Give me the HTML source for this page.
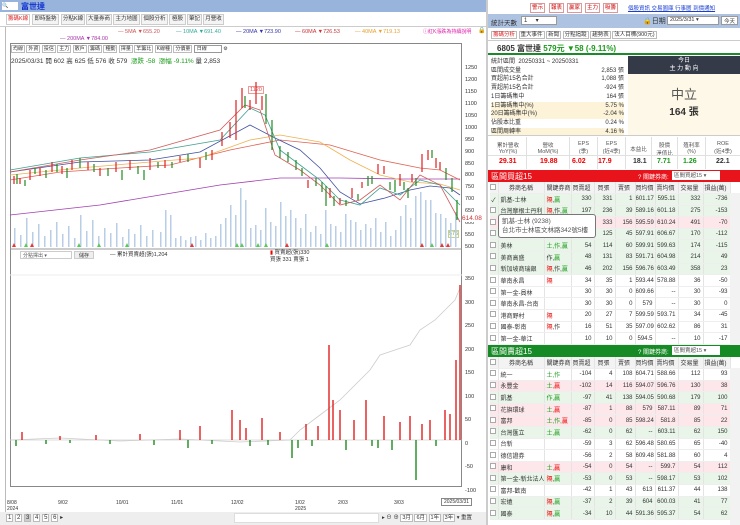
<!DOCTYPE html>
<html><head><meta charset="utf-8"><style>
*{box-sizing:border-box;margin:0;padding:0}
body{width:740px;height:525px;overflow:hidden;background:#fff;font-family:"Liberation Sans","Noto Sans CJK TC",sans-serif;font-size:7px;color:#333;position:relative}
.a{position:absolute;white-space:nowrap}
.tab{position:absolute;top:14px;height:11px;border:1px solid #ccc;background:#f4f4f4;font-size:5.5px;line-height:9px;text-align:center;white-space:nowrap;overflow:hidden}
.btn{position:absolute;top:3px;height:10px;border:1px solid #d99;background:#fff;color:#c00;font-size:5.5px;line-height:8px;text-align:center;white-space:nowrap;overflow:hidden}
table{border-collapse:collapse;table-layout:fixed;position:absolute;left:490px;width:240px;font-size:6px}
tr{height:11.6px}
td{height:11.6px;border-right:1px solid #e4e4e4;border-bottom:1px solid #eee;text-align:right;padding-right:2px;white-space:nowrap;overflow:hidden}
td:nth-child(2){text-align:left;padding-left:2px}td:nth-child(3){text-align:left;padding-left:2px}
tr.h td{background:#f3f3f3;text-align:center;color:#333}
tr.g td{background:#e9f5e9}tr.r td{background:#fde7ea}
.cb{display:inline-block;width:6px;height:6px;border:1px solid #aaa;background:#fff}
.rd{color:#e00}.gr{color:#1a9a1a}
.mt{position:absolute;top:137px;height:32px;text-align:center;font-size:5.5px;color:#555;border-right:1px solid #e0e0e0;white-space:nowrap}
.tb span{border:1px solid #bbb;padding:0 1px}
</style></head><body>
<div class="a" style="left:0;top:0;width:488px;height:12px;background:#98b4dc"></div>
<div class="a" style="left:2px;top:2px;width:16px;height:8px;background:#fff;font-size:5px;line-height:8px">🔍</div>
<div class="a" style="left:21px;top:1px;color:#1030d0;font-size:8px;font-weight:bold">富世達</div>
<div class="tab" style="left:6px;width:24px;color:#d22;background:#fff">籌碼K線</div>
<div class="tab" style="left:32px;width:27px">即時盤勢</div>
<div class="tab" style="left:61px;width:24px">分點K線</div>
<div class="tab" style="left:86px;width:26px">大量券商</div>
<div class="tab" style="left:113px;width:27px">主力地圖</div>
<div class="tab" style="left:141px;width:27px">個股分析</div>
<div class="tab" style="left:169px;width:17px">極股</div>
<div class="tab" style="left:187px;width:15px">筆記</div>
<div class="tab" style="left:203px;width:21px">月營收</div>
<div class="a" style="left:0;top:26px;width:488px;height:1px;background:#ccc"></div>
<div class="a" style="left:5px;top:27px;width:1px;height:485px;background:#bbb"></div>
<div class="a" style="top:29px;left:118px;font-size:5.5px;color:#c55">— 5MA ▼655.20</div>
<div class="a" style="top:29px;left:176px;font-size:5.5px;color:#3a9">— 10MA ▼691.40</div>
<div class="a" style="top:29px;left:236px;font-size:5.5px;color:#33a">— 20MA ▼723.90</div>
<div class="a" style="top:29px;left:295px;font-size:5.5px;color:#c33">— 60MA ▼726.53</div>
<div class="a" style="top:29px;left:355px;font-size:5.5px;color:#e9a030">— 40MA ▼719.13</div>
<div class="a" style="top:36px;left:60px;font-size:5.5px;color:#a3a">— 200MA ▼784.00</div>
<div class="a" style="top:28px;left:423px;font-size:5px;color:#d2a">ⓘ紅K漲跌為持續說明</div>
<div class="a" style="top:27px;left:478px;font-size:6px">🔒</div>
<div class="a" style="left:10px;top:43px;width:452px;height:444px;border:1px solid #888"></div>
<div class="a tb" style="left:11px;top:45px;font-size:5px">
<span>均線</span> <span>外資</span> <span>投信</span> <span>主力</span> <span>散戶</span> <span>籌碼</span> <span>種動</span> <span>擇量</span> <span>羊籌比</span> <span>K線種</span> <span>分價量</span> <span style="border-color:#999;padding:0 14px 0 2px">日線</span> ⚙</div>
<div class="a" style="left:11px;top:55px;font-size:6.5px">2025/03/31 開 602 高 625 低 576 收 579 <span class="gr">&nbsp;漲跌 -58 &nbsp;漲幅 -9.11%</span> 量 2,853</div>
<div class="a" style="left:465px;top:63px;font-size:5.5px;line-height:11.93px;color:#333;white-space:normal">1250<br>1200<br>1150<br>1100<br>1050<br>1000<br>950<br>900<br>850<br>800<br>750<br>700<br>650<br>600<br>550<br>500</div>
<div class="a" style="left:462px;top:215px;font-size:6.5px;color:#c33;background:#fff">614.08</div>
<div class="a" style="left:448px;top:230px;font-size:5.5px;color:#6a6;background:#ffe;border:1px solid #cc9">576</div>
<div class="a" style="left:248px;top:86px;font-size:5.5px;color:#d44;border:1px solid #e99;padding:0 1px">1120</div>
<svg class="a" style="left:0;top:0" width="490" height="525">
<g fill="#b8cde6">
<rect x="14" y="228" width="1.5" height="19"/><rect x="20" y="235" width="1.5" height="12"/><rect x="26" y="218" width="1.5" height="29"/><rect x="32" y="232" width="1.5" height="15"/><rect x="38" y="224" width="1.5" height="23"/><rect x="44" y="236" width="1.5" height="11"/><rect x="50" y="230" width="1.5" height="17"/><rect x="56" y="222" width="1.5" height="25"/><rect x="62" y="234" width="1.5" height="13"/><rect x="68" y="226" width="1.5" height="21"/><rect x="74" y="238" width="1.5" height="9"/><rect x="80" y="215" width="1.5" height="32"/><rect x="86" y="231" width="1.5" height="16"/><rect x="92" y="220" width="1.5" height="27"/><rect x="98" y="236" width="1.5" height="11"/><rect x="104" y="228" width="1.5" height="19"/><rect x="110" y="233" width="1.5" height="14"/><rect x="116" y="223" width="1.5" height="24"/><rect x="122" y="237" width="1.5" height="10"/><rect x="128" y="229" width="1.5" height="18"/><rect x="134" y="234" width="1.5" height="13"/><rect x="140" y="225" width="1.5" height="22"/><rect x="146" y="236" width="1.5" height="11"/><rect x="152" y="230" width="1.5" height="17"/>
<rect x="160" y="232" width="1.5" height="15"/><rect x="165" y="210" width="1.5" height="37"/><rect x="170" y="215" width="1.5" height="32"/><rect x="175" y="238" width="1.5" height="9"/><rect x="180" y="236" width="1.5" height="11"/><rect x="185" y="240" width="1.5" height="7"/><rect x="190" y="237" width="1.5" height="10"/><rect x="195" y="236" width="1.5" height="11"/><rect x="200" y="240" width="1.5" height="7"/><rect x="205" y="233" width="1.5" height="14"/><rect x="210" y="238" width="1.5" height="9"/><rect x="215" y="236" width="1.5" height="11"/><rect x="220" y="224" width="1.5" height="23"/><rect x="225" y="218" width="1.5" height="29"/><rect x="230" y="205" width="1.5" height="42"/><rect x="235" y="215" width="1.5" height="32"/><rect x="240" y="188" width="1.5" height="59"/><rect x="245" y="200" width="1.5" height="47"/><rect x="250" y="228" width="1.5" height="19"/><rect x="255" y="225" width="1.5" height="22"/><rect x="260" y="230" width="1.5" height="17"/><rect x="265" y="208" width="1.5" height="39"/><rect x="270" y="222" width="1.5" height="25"/><rect x="275" y="226" width="1.5" height="21"/><rect x="280" y="202" width="1.5" height="45"/><rect x="285" y="216" width="1.5" height="31"/><rect x="290" y="210" width="1.5" height="37"/><rect x="295" y="218" width="1.5" height="29"/><rect x="300" y="228" width="1.5" height="19"/><rect x="305" y="214" width="1.5" height="33"/><rect x="310" y="232" width="1.5" height="15"/><rect x="315" y="226" width="1.5" height="21"/><rect x="320" y="234" width="1.5" height="13"/><rect x="325" y="210" width="1.5" height="37"/><rect x="330" y="224" width="1.5" height="23"/><rect x="335" y="226" width="1.5" height="21"/><rect x="340" y="232" width="1.5" height="15"/><rect x="345" y="214" width="1.5" height="33"/><rect x="350" y="220" width="1.5" height="27"/><rect x="355" y="222" width="1.5" height="25"/><rect x="360" y="230" width="1.5" height="17"/><rect x="365" y="224" width="1.5" height="23"/><rect x="370" y="228" width="1.5" height="19"/><rect x="375" y="218" width="1.5" height="29"/><rect x="380" y="232" width="1.5" height="15"/><rect x="385" y="222" width="1.5" height="25"/><rect x="390" y="236" width="1.5" height="11"/><rect x="395" y="230" width="1.5" height="17"/><rect x="400" y="216" width="1.5" height="31"/><rect x="405" y="205" width="1.5" height="42"/><rect x="410" y="218" width="1.5" height="29"/><rect x="415" y="196" width="1.5" height="51"/><rect x="420" y="192" width="1.5" height="55"/><rect x="425" y="200" width="1.5" height="47"/><rect x="430" y="200" width="1.5" height="47"/><rect x="435" y="213" width="1.5" height="34"/><rect x="440" y="214" width="1.5" height="33"/><rect x="445" y="218" width="1.5" height="29"/><rect x="450" y="223" width="1.5" height="24"/><rect x="455" y="212" width="1.5" height="35"/>
</g>
<polyline fill="none" stroke="#a040b0" stroke-width="0.8" points="10,215 100,205 160,195 220,185 280,178 340,178 400,179 460,179"/>
<polyline fill="none" stroke="#e06050" stroke-width="0.8" points="10,180 60,172 120,168 170,165 230,150 280,140 330,145 380,160 420,168 440,170 460,180"/>
<polyline fill="none" stroke="#f0b050" stroke-width="0.8" points="10,175 80,168 150,162 200,158 250,140 280,135 320,142 350,160 380,175 410,182 440,184 460,190"/>
<polyline fill="none" stroke="#4050a0" stroke-width="0.8" points="10,172 80,162 150,160 200,152 250,125 275,138 300,150 320,168 340,192 360,204 385,198 410,190 430,186 450,188 460,195"/>
<polyline fill="none" stroke="#40a090" stroke-width="0.8" points="10,170 80,158 150,152 220,140 250,108 265,115 280,150 300,165 320,180 340,200 360,205 380,188 400,195 420,180 440,185 460,205"/>
<polyline fill="none" stroke="#d05a5a" stroke-width="0.8" points="10,172 80,160 150,150 220,130 245,105 260,110 275,155 300,170 320,185 340,205 360,200 380,185 400,200 420,175 440,185 460,222"/>
<g stroke-width="1.2">
<path stroke="#e02020" d="M14 176v8M20 178v6M30 170v10M40 168v8M52 162v10M62 166v8M72 160v10M88 162v8M100 168v8M116 162v10M130 160v10M150 158v12M165 160v8M180 156v6M200 158v10M212 150v10M222 132v14M230 122v16M236 100v40M242 88v20M250 100v10M256 82v22M262 96v14M308 180v8M330 188v10M340 198v6M352 188v10M362 182v6M378 164v10M384 166v8M400 174v12M412 174v8M422 154v18M428 150v10M436 158v10M440 162v8"/>
<path stroke="#208a20" d="M17 174v10M25 180v6M35 168v6M46 170v8M57 164v8M67 168v10M80 158v10M94 164v8M108 168v8M122 170v10M138 166v8M144 170v10M158 162v6M172 162v6M188 154v8M206 152v8M245 96v12M266 94v30M272 120v30M280 146v12M288 152v10M296 160v10M302 168v8M316 178v8M322 182v10M326 186v20M334 196v10M346 200v6M358 194v6M368 176v10M372 176v8M390 182v8M395 180v12M404 182v8M408 188v10M416 178v8M432 150v8M446 168v12M452 178v14M457 200v20"/>
</g>
<path fill="#e33" d="M12 247l2-4 2 4zM30 247l2-4 2 4zM190 247l2-4 2 4zM285 247l2-4 2 4zM420 247l2-4 2 4zM440 247l2-4 2 4zM446 247l2-4 2 4z"/>
<path fill="#5c5" d="M24 247l2-4 2 4zM77 247l2-4 2 4zM97 247l2-4 2 4zM125 247l2-4 2 4zM235 247l2-4 2 4zM240 247l2-4 2 4zM256 247l2-4 2 4zM264 247l2-4 2 4zM325 247l2-4 2 4zM430 247l2-4 2 4z"/>
<line x1="10" y1="249" x2="462" y2="249" stroke="#999"/>
<line x1="10" y1="275" x2="462" y2="275" stroke="#eee"/>
<line x1="10" y1="440" x2="462" y2="440" stroke="#bbb" stroke-width="0.6"/>
<polyline fill="none" stroke="#ccc" stroke-width="0.8" points="10,440 60,438 120,441 180,439 240,442 290,440 300,430 320,415 340,400 360,380 370,370 380,355 395,350 410,345 420,330 435,320 445,310 455,300 460,288"/>
<path stroke="#e02020" stroke-width="1.4" d="M22 440v-8M60 440v-4M96 440v-5M140 440v-6M180 440v-10M200 440v-14M232 440v-30M240 440v-20M246 440v-12M262 440v-22M280 440v-8M306 440v-16M318 440v-14M329 440v-95M333 440v-40M340 440v-30M354 440v-20M366 440v-40M384 440v-24M400 440v-18M410 440v-24M422 440v-16M430 440v-20M445 440v-30M450 440v-26M456 440v-80M460 440v-155"/>
<path stroke="#208a20" stroke-width="1.4" d="M16 440v6M46 440v4M70 440v3M110 440v4M154 440v5M188 440v8M212 440v4M250 440v6M268 440v5M292 440v18M298 440v8M312 440v6M346 440v10M372 440v6M378 440v8M392 440v10M416 440v40M436 440v6"/>
</svg>
<div class="a" style="left:20px;top:251px;width:52px;height:8px;border:1px solid #ccc;font-size:5px;color:#555;padding-left:2px">分點擇出 ▾</div>
<div class="a" style="left:74px;top:251px;width:20px;height:8px;border:1px solid #ccc;background:#eee;font-size:5px;text-align:center">儲存</div>
<div class="a" style="left:110px;top:250px;font-size:5.5px">— 累計買賣超(張)1,204</div>
<div class="a" style="left:270px;top:250px;font-size:5.5px;line-height:7px"><span class="rd">▮</span> 買賣超(張)330<br>買張 331 賣張 1</div>
<div class="a" style="left:465px;top:268px;font-size:5.5px;line-height:23.5px">350<br>300<br>250<br>200<br>150<br>100<br>50<br>0<br>-50<br>-100</div>
<div class="a" style="top:500px;left:7px;font-size:5px;line-height:6px">8/08<br>2024</div>
<div class="a" style="top:500px;left:58px;font-size:5px">9/02</div>
<div class="a" style="top:500px;left:116px;font-size:5px">10/01</div>
<div class="a" style="top:500px;left:171px;font-size:5px">11/01</div>
<div class="a" style="top:500px;left:231px;font-size:5px">12/02</div>
<div class="a" style="top:500px;left:295px;font-size:5px;line-height:6px">1/02<br>2025</div>
<div class="a" style="top:500px;left:338px;font-size:5px">2/03</div>
<div class="a" style="top:500px;left:394px;font-size:5px">3/03</div>
<div class="a" style="top:498px;left:441px;font-size:5px;border:1px solid #888;padding:0 2px;background:#fff">2025/03/31</div>
<div class="a" style="left:0;top:512px;width:488px;height:13px;background:#eee"></div>
<div class="a tb" style="left:6px;top:514px;font-size:6px"><span style="background:#fff">1</span> <span style="background:#fff">2</span> <span style="background:#ccc">3</span> <span style="background:#fff">4</span> <span style="background:#fff">5</span> <span style="background:#fff">6</span> ▸</div>
<div class="a" style="left:234px;top:513px;width:145px;height:10px;background:#fff;border:1px solid #ddd"></div>
<div class="a tb" style="left:382px;top:513px;font-size:5.5px">▸ ⊖ ⊕ <span style="background:#fff">3月</span> <span style="background:#fff">6月</span> <span style="background:#fff">1年</span> <span style="background:#fff">3年</span> ▾ 重置</div>
<div class="a" style="left:486px;top:0;width:2px;height:525px;background:#ccc"></div>

<div class="btn" style="left:530px;width:15px">警示</div>
<div class="btn" style="left:549px;width:15px">報表</div>
<div class="btn" style="left:567px;width:15px">贏家</div>
<div class="btn" style="left:585px;width:15px">主力</div>
<div class="btn" style="left:603px;width:15px">吸籌</div>
<div class="a" style="left:628px;top:4px;font-size:5.5px;color:#1a3fd0;text-decoration:underline">個股資訊 交易圖庫 行事曆 到價通知</div>
<div class="a" style="left:488px;top:14px;width:252px;height:14px;background:#aec3e2"></div>
<div class="a" style="left:491px;top:17px;font-size:6.5px">統計天數</div>
<div class="a" style="left:521px;top:16px;width:36px;height:9px;background:#fff;border:1px solid #999;font-size:6px;padding-left:2px">1 &nbsp;&nbsp;&nbsp;&nbsp;▾</div>
<div class="a" style="left:643px;top:16px;font-size:7px">🔒日期</div>
<div class="a" style="left:667px;top:16px;width:52px;height:9px;background:#fff;border:1px solid #999;font-size:5.5px;padding-left:2px">2025/3/31 ▾</div>
<div class="a" style="left:721px;top:16px;width:17px;height:9px;background:#fff;border:1px solid #999;font-size:5.5px;text-align:center">今天</div>
<div class="a tb" style="left:491px;top:30px;font-size:5.5px"><span style="color:#d22">籌碼分析</span> <span>重大事件</span> <span>新聞</span> <span>分點追蹤</span> <span>趨勢表</span> <span>法人目標(900元)</span></div>
<div class="a" style="left:488px;top:40px;width:252px;height:15px;border-top:1px solid #ccc;border-bottom:2px solid #1a8a2a"></div>
<div class="a" style="left:497px;top:43px;font-size:8px;font-weight:bold">6805 富世達 <span class="gr">579元 ▼58 (-9.11%)</span></div>
<div class="a" style="left:491px;top:58px;font-size:6px;line-height:8.7px;width:133px">
<div>統計區間 &nbsp;20250331 ~ 20250331</div>
<div>區間成交量<span style="float:right">2,853 張</span></div>
<div>買超前15名合計<span style="float:right">1,088 張</span></div>
<div>賣超前15名合計<span style="float:right">-924 張</span></div>
<div>1日籌碼集中<span style="float:right">164 張</span></div>
<div style="background:#fdf3d8">1日籌碼集中(%)<span style="float:right">5.75 %</span></div>
<div style="background:#fdf3d8">20日籌碼集中(%)<span style="float:right">-2.04 %</span></div>
<div>佔股本比重<span style="float:right">0.24 %</span></div>
<div style="background:#fdf3d8">區間周轉率<span style="float:right">4.16 %</span></div>
</div>
<div class="a" style="left:628px;top:56px;width:112px;height:18px;background:#343a48;color:#fff;text-align:center;font-size:6px;line-height:8px;padding-top:1px">今日<br>主 力 動 向</div>
<div class="a" style="left:628px;top:74px;width:112px;height:61px;background:#fdf8e8;text-align:center"><div style="font-size:13px;color:#555;margin-top:10px">中立</div><div style="font-size:10px;font-weight:bold;color:#333">164 張</div></div>
<div class="a" style="left:488px;top:135px;width:252px;height:1px;background:#ccc"></div>
<div class="mt" style="left:490px;width:37px;padding-top:4px">累計營收<br>YoY(%)</div>
<div class="mt" style="left:527px;width:43px;padding-top:4px">營收<br>MoM(%)</div>
<div class="mt" style="left:570px;width:28px;padding-top:4px">EPS<br>(季)</div>
<div class="mt" style="left:598px;width:28px;padding-top:4px">EPS<br>(近4季)</div>
<div class="mt" style="left:626px;width:26px;padding-top:8px">本益比</div>
<div class="mt" style="left:652px;width:26px;padding-top:4px">股價<br>淨值比</div>
<div class="mt" style="left:678px;width:28px;padding-top:4px">殖利率<br>(%)</div>
<div class="mt" style="left:706px;width:34px;padding-top:4px;border:0">ROE<br>(近4季)</div>
<div class="a" style="left:488px;top:155px;width:252px;height:1px;background:#e0e0e0"></div>
<div class="a" style="left:490px;top:158px;width:250px;font-size:7px;font-weight:bold">
<span class="rd" style="position:absolute;left:9px">29.31</span><span class="rd" style="position:absolute;left:50px">19.88</span><span class="rd" style="position:absolute;left:82px">6.02</span><span class="rd" style="position:absolute;left:108px">17.9</span><span style="position:absolute;left:143px">18.1</span><span class="gr" style="position:absolute;left:167px">7.71</span><span class="gr" style="position:absolute;left:193px">1.26</span><span style="position:absolute;left:226px">22.1</span></div>
<div class="a" style="left:488px;top:170px;width:252px;height:12px;background:#e8141c"></div>
<div class="a" style="left:491px;top:171px;color:#fff;font-size:8px">區間買超15</div>
<div class="a" style="left:638px;top:172px;color:#fff;font-size:6px">? 關鍵券商:</div>
<div class="a" style="left:672px;top:171px;width:48px;height:9px;background:#fff;font-size:5.5px;padding-left:2px;color:#555">區間買超15 ▾</div>
<table style="top:182px">
<colgroup><col style="width:8px"><col style="width:46px"><col style="width:27px"><col style="width:23px"><col style="width:21px"><col style="width:20px"><col style="width:20px"><col style="width:23px"><col style="width:25px"><col style="width:27px"></colgroup>
<tr class="h"><td><span class="cb"></span></td><td>券商名稱</td><td>關鍵券商</td><td>買賣超</td><td>買張</td><td>賣張</td><td>買均價</td><td>賣均價</td><td>交易量</td><td>損益(萬)</td></tr>
<tr class="g"><td>✓</td><td>凱基-士林</td><td><span class="rd">隔</span>,<span class="gr">贏</span></td><td>330</td><td>331</td><td>1</td><td>601.17</td><td>595.11</td><td>332</td><td>-736</td></tr>
<tr class="g"><td><span class="cb"></span></td><td>台灣摩根士丹利</td><td><span class="rd">隔</span>,作,<span class="gr">贏</span></td><td>197</td><td>236</td><td>39</td><td>589.16</td><td>601.18</td><td>275</td><td>-153</td></tr>
<tr class="r"><td><span class="cb"></span></td><td>凱基</td><td></td><td>177</td><td>333</td><td>156</td><td>595.59</td><td>610.24</td><td>491</td><td>-70</td></tr>
<tr class="g"><td><span class="cb"></span></td><td>摩根</td><td></td><td>80</td><td>125</td><td>45</td><td>597.91</td><td>606.67</td><td>170</td><td>-112</td></tr>
<tr class="g"><td><span class="cb"></span></td><td>美林</td><td><span class="gr">土,作,贏</span></td><td>54</td><td>114</td><td>60</td><td>599.91</td><td>599.63</td><td>174</td><td>-115</td></tr>
<tr class="g"><td><span class="cb"></span></td><td>美商高盛</td><td>作,<span class="gr">贏</span></td><td>48</td><td>131</td><td>83</td><td>591.71</td><td>604.98</td><td>214</td><td>49</td></tr>
<tr class="g"><td><span class="cb"></span></td><td>新加坡商瑞銀</td><td><span class="rd">隔</span>,作,<span class="gr">贏</span></td><td>46</td><td>202</td><td>156</td><td>596.76</td><td>603.49</td><td>358</td><td>23</td></tr>
<tr><td><span class="cb"></span></td><td>華南永昌</td><td><span class="rd">隔</span></td><td>34</td><td>35</td><td>1</td><td>593.44</td><td>578.88</td><td>36</td><td>-50</td></tr>
<tr><td><span class="cb"></span></td><td>第一金-員林</td><td></td><td>30</td><td>30</td><td>0</td><td>609.66</td><td>--</td><td>30</td><td>-93</td></tr>
<tr><td><span class="cb"></span></td><td>華南永昌-台南</td><td></td><td>30</td><td>30</td><td>0</td><td>579</td><td>--</td><td>30</td><td>0</td></tr>
<tr><td><span class="cb"></span></td><td>港商野村</td><td><span class="rd">隔</span></td><td>20</td><td>27</td><td>7</td><td>599.59</td><td>593.71</td><td>34</td><td>-45</td></tr>
<tr><td><span class="cb"></span></td><td>國泰-彰南</td><td><span class="rd">隔</span>,作</td><td>16</td><td>51</td><td>35</td><td>597.09</td><td>602.62</td><td>86</td><td>31</td></tr>
<tr><td><span class="cb"></span></td><td>第一金-華江</td><td></td><td>10</td><td>10</td><td>0</td><td>594.5</td><td>--</td><td>10</td><td>-17</td></tr>
</table>
<div class="a" style="left:498px;top:214px;width:98px;height:24px;background:#fff;border:1px solid #777;border-radius:3px;font-size:6.5px;line-height:9px;padding:2px 3px;color:#555">凱基-士林 (9238)<br>台北市士林區文林路342號5樓</div>
<div class="a" style="left:488px;top:345px;width:252px;height:12px;background:#168a24"></div>
<div class="a" style="left:491px;top:346px;color:#fff;font-size:8px">區間賣超15</div>
<div class="a" style="left:638px;top:347px;color:#fff;font-size:6px">? 關鍵券商:</div>
<div class="a" style="left:672px;top:346px;width:48px;height:9px;background:#fff;font-size:5.5px;padding-left:2px;color:#555">區間賣超15 ▾</div>
<table style="top:357px">
<colgroup><col style="width:8px"><col style="width:46px"><col style="width:27px"><col style="width:23px"><col style="width:21px"><col style="width:20px"><col style="width:20px"><col style="width:23px"><col style="width:25px"><col style="width:27px"></colgroup>
<tr class="h"><td><span class="cb"></span></td><td>券商名稱</td><td>關鍵券商</td><td>買賣超</td><td>買張</td><td>賣張</td><td>買均價</td><td>賣均價</td><td>交易量</td><td>損益(萬)</td></tr>
<tr><td><span class="cb"></span></td><td>統一</td><td><span class="gr">土,作</span></td><td>-104</td><td>4</td><td>108</td><td>604.71</td><td>588.66</td><td>112</td><td>93</td></tr>
<tr class="r"><td><span class="cb"></span></td><td>永豐金</td><td><span class="gr">土,</span><span class="rd">贏</span></td><td>-102</td><td>14</td><td>116</td><td>594.07</td><td>596.76</td><td>130</td><td>38</td></tr>
<tr class="g"><td><span class="cb"></span></td><td>凱基</td><td><span class="gr">作,贏</span></td><td>-97</td><td>41</td><td>138</td><td>594.05</td><td>590.68</td><td>179</td><td>100</td></tr>
<tr class="r"><td><span class="cb"></span></td><td>花旗環球</td><td><span class="gr">土,</span><span class="rd">贏</span></td><td>-87</td><td>1</td><td>88</td><td>579</td><td>587.11</td><td>89</td><td>71</td></tr>
<tr class="r"><td><span class="cb"></span></td><td>富邦</td><td><span class="gr">土,作,</span><span class="rd">贏</span></td><td>-85</td><td>0</td><td>85</td><td>598.24</td><td>581.8</td><td>85</td><td>22</td></tr>
<tr class="g"><td><span class="cb"></span></td><td>台灣匯立</td><td><span class="gr">土,贏</span></td><td>-62</td><td>0</td><td>62</td><td>--</td><td>603.11</td><td>62</td><td>150</td></tr>
<tr><td><span class="cb"></span></td><td>台新</td><td></td><td>-59</td><td>3</td><td>62</td><td>596.48</td><td>580.65</td><td>65</td><td>-40</td></tr>
<tr><td><span class="cb"></span></td><td>德信證券</td><td></td><td>-56</td><td>2</td><td>58</td><td>609.48</td><td>581.88</td><td>60</td><td>4</td></tr>
<tr class="r"><td><span class="cb"></span></td><td>康和</td><td><span class="gr">土,</span><span class="rd">贏</span></td><td>-54</td><td>0</td><td>54</td><td>--</td><td>599.7</td><td>54</td><td>112</td></tr>
<tr class="g"><td><span class="cb"></span></td><td>第一金-新北法人</td><td><span class="rd">隔</span>,<span class="gr">贏</span></td><td>-53</td><td>0</td><td>53</td><td>--</td><td>598.17</td><td>53</td><td>102</td></tr>
<tr><td><span class="cb"></span></td><td>富邦-歡南</td><td></td><td>-42</td><td>1</td><td>43</td><td>613</td><td>611.37</td><td>44</td><td>138</td></tr>
<tr class="g"><td><span class="cb"></span></td><td>宏遠</td><td><span class="rd">隔</span>,<span class="gr">贏</span></td><td>-37</td><td>2</td><td>39</td><td>604</td><td>600.03</td><td>41</td><td>77</td></tr>
<tr class="g"><td><span class="cb"></span></td><td>國泰</td><td><span class="rd">隔</span>,<span class="gr">贏</span></td><td>-34</td><td>10</td><td>44</td><td>591.36</td><td>595.37</td><td>54</td><td>62</td></tr>
</table>
<div class="a" style="left:730px;top:193px;width:10px;height:152px;background:#f2f2f2"></div>
<div class="a" style="left:730px;top:368px;width:10px;height:157px;background:#f2f2f2"></div>
</body></html>
